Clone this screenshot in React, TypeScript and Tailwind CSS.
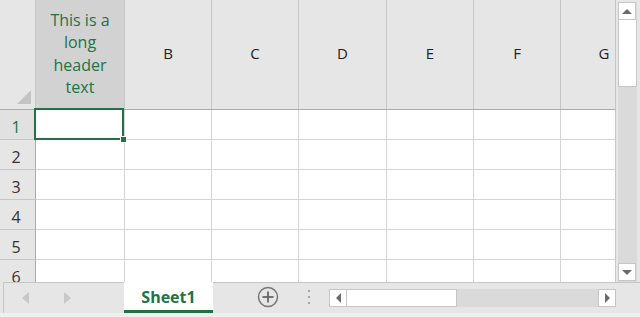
import React from "react";

const cols = [
  { key: "A", w: "w-[89px]" },
  { key: "B", w: "w-[87px]" },
  { key: "C", w: "w-[87px]" },
  { key: "D", w: "w-[88px]" },
  { key: "E", w: "w-[87px]" },
  { key: "F", w: "w-[87px]" },
  { key: "G", w: "w-[87px]" },
];

const rows = [1, 2, 3, 4, 5, 6];

function ScrollBtn({ dir }: { dir: "up" | "down" | "left" | "right" }) {
  const pts =
    dir === "up"
      ? "2,8 7,3 12,8"
      : dir === "down"
      ? "2,3 7,8 12,3"
      : dir === "left"
      ? "8,2 3,7 8,12"
      : "3,2 8,7 3,12";
  const vb = dir === "up" || dir === "down" ? "0 0 14 11" : "0 0 11 14";
  const size =
    dir === "up" || dir === "down" ? "w-[14px] h-[11px]" : "w-[11px] h-[14px]";
  return (
    <div className="w-[18px] h-[18px] bg-white border border-[#c6c6c6] flex items-center justify-center shrink-0">
      <svg viewBox={vb} className={size}>
        <polygon points={pts} fill="#6b6b6b" />
      </svg>
    </div>
  );
}

export default function App() {
  return (
    <div className="w-[640px] h-[317px] bg-[#e6e6e6] flex flex-col overflow-hidden font-['Open_Sans',sans-serif] text-[16px] leading-none">
      <div className="flex h-[282px] shrink-0">
        {/* Grid */}
        <div className="w-[616px] flex flex-col overflow-hidden bg-white border-r border-[#c6c6c6]">
          {/* Header row */}
          <div className="flex h-[110px] shrink-0 border-b border-[#ababab] bg-[#e6e6e6]">
            <div className="w-[36px] shrink-0 flex items-end justify-end pr-[4px] pb-[5px] border-r border-[#c6c6c6]">
              <svg viewBox="0 0 14 14" className="w-[14px] h-[14px]">
                <polygon points="14,0 14,14 0,14" fill="#c4c4c4" />
              </svg>
            </div>
            {cols.map((c, i) => (
              <div
                key={c.key}
                className={`${c.w} shrink-0 flex items-center justify-center border-r border-[#c6c6c6] ${
                  i === 0 ? "bg-[#d2d2d2]" : ""
                }`}
              >
                {i === 0 ? (
                  <div className="text-[#217346] text-center leading-[22.5px] text-[16px] -mt-[2px]">
                    This is a<br />long<br />header<br />text
                  </div>
                ) : (
                  <span className="text-[#222] text-[15px] -mt-[2px]">{c.key}</span>
                )}
              </div>
            ))}
          </div>
          {/* Rows */}
          {rows.map((r) => (
            <div key={r} className="flex h-[30px] shrink-0 border-b border-[#d4d4d4]">
              <div
                className={`w-[36px] shrink-0 flex items-center justify-center pr-[3px] pt-[5px] border-r border-[#ababab] -mb-px border-b border-b-[#c6c6c6] text-[16px] ${
                  r === 1 ? "bg-[#e1e1e1] text-[#217346]" : "bg-[#e6e6e6] text-[#333]"
                }`}
              >
                {r}
              </div>
              {cols.map((c, i) => (
                <div
                  key={c.key}
                  className={`${c.w} shrink-0 border-r border-[#d4d4d4] relative`}
                >
                  {r === 1 && i === 0 && (
                    <div className="absolute -left-[2px] -top-[2px] w-[90px] h-[32px] border-2 border-[#217346] z-10">
                      <div className="absolute -right-[5px] -bottom-[5px] w-[7px] h-[7px] bg-[#217346] border border-white" />
                    </div>
                  )}
                </div>
              ))}
            </div>
          ))}
        </div>
        {/* Vertical scrollbar */}
        <div className="w-[24px] shrink-0 flex flex-col pl-[2px] pr-[3px] pt-[2px] bg-[#e6e6e6]">
          <div className="flex-1 flex flex-col bg-[#dadada] pb-[1px]">
            <ScrollBtn dir="up" />
            <div className="h-[67px] bg-white border border-t-0 border-[#c6c6c6]" />
            <div className="flex-1" />
            <ScrollBtn dir="down" />
          </div>
        </div>
      </div>
      {/* Bottom bar */}
      <div className="flex-1 flex flex-col">
        <div className="h-[31px] flex border-t border-[#c6c6c6] ml-[3px] border-l">
          <div className="w-[120px] flex items-center shrink-0">
            <svg viewBox="0 0 8 12" className="w-[8px] h-[12px] ml-[18px]">
              <polygon points="7,0 7,12 0,6" fill="#c8c8c8" />
            </svg>
            <svg viewBox="0 0 8 12" className="w-[8px] h-[12px] ml-[33px]">
              <polygon points="1,0 1,12 8,6" fill="#c8c8c8" />
            </svg>
          </div>
          <div className="w-[89px] shrink-0 bg-white border-b-[3px] border-[#217346] -mt-px flex items-center justify-center pt-[1px]">
            <span className="font-bold text-[#217346] text-[16px]">Sheet1</span>
          </div>
          <div className="w-[44px] shrink-0" />
          <div className="w-[22px] h-[22px] shrink-0 self-center -mt-[2px]">
            <svg viewBox="0 0 22 22" className="w-[22px] h-[22px]">
              <circle cx="11" cy="11" r="9.5" fill="none" stroke="#777" strokeWidth="1.5" />
              <line x1="11" y1="5.5" x2="11" y2="16.5" stroke="#666" strokeWidth="1.8" />
              <line x1="5.5" y1="11" x2="16.5" y2="11" stroke="#666" strokeWidth="1.8" />
            </svg>
          </div>
          <div className="w-[29px] shrink-0" />
          <div className="flex flex-col gap-[4px] self-center -mt-[2px] w-[2px] shrink-0">
            <div className="w-[2px] h-[2px] bg-[#a6a6a6]" />
            <div className="w-[2px] h-[2px] bg-[#a6a6a6]" />
            <div className="w-[2px] h-[2px] bg-[#a6a6a6]" />
          </div>
          <div className="w-[19px] shrink-0" />
          <div className="flex items-center h-[18px] mt-[6px] w-[287px] shrink-0 bg-[#dadada]">
            <ScrollBtn dir="left" />
            <div className="w-[110px] h-[18px] bg-white border border-l-0 border-[#c6c6c6]" />
            <div className="flex-1" />
            <ScrollBtn dir="right" />
          </div>
        </div>
        <div className="flex-1 bg-[#f0f0f0]" />
      </div>
    </div>
  );
}
